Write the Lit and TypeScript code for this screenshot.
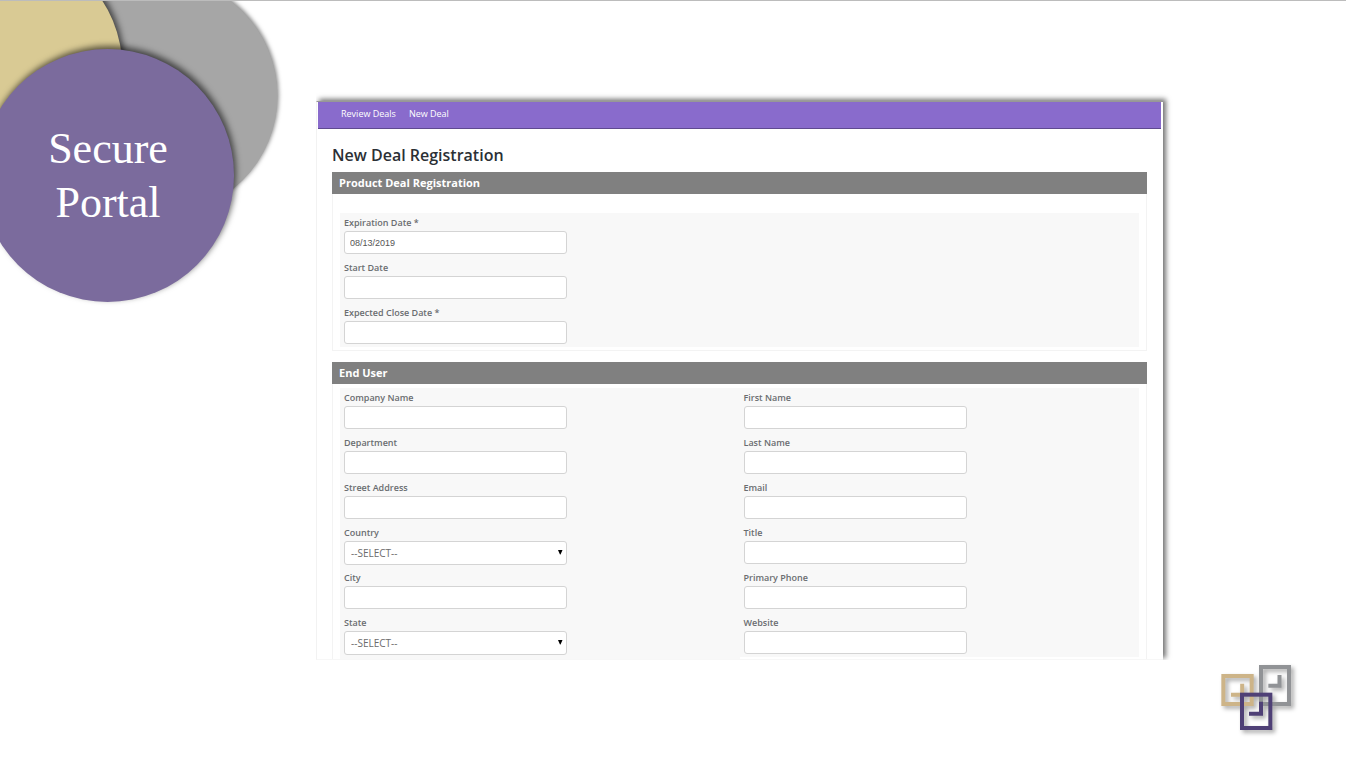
import { LitElement, html, css, svg } from "lit";
import { customElement } from "lit/decorators.js";

interface Field {
  id: string;
  label: string;
  value?: string;
  select?: boolean;
}

const DATES: Field[] = [
  { id: "expiration", label: "Expiration Date *", value: "08/13/2019" },
  { id: "start", label: "Start Date" },
  { id: "close", label: "Expected Close Date *" },
];

const COMPANY: Field[] = [
  { id: "company", label: "Company Name" },
  { id: "department", label: "Department" },
  { id: "street", label: "Street Address" },
  { id: "country", label: "Country", select: true },
  { id: "city", label: "City" },
  { id: "state", label: "State", select: true },
];

const CONTACT: Field[] = [
  { id: "first", label: "First Name" },
  { id: "last", label: "Last Name" },
  { id: "email", label: "Email" },
  { id: "title", label: "Title" },
  { id: "phone", label: "Primary Phone" },
  { id: "website", label: "Website" },
];

@customElement("deal-form")
export class DealForm extends LitElement {
  static styles = css`
    :host {
      display: block;
      color: #2b3035;
      background: #fff;
      border-top: 1px solid #979797;
      border-left: 1px solid #f2f2f2;
      border-bottom: 1px solid #f7f7f7;
      box-shadow: 3px -2px 5px rgba(0, 0, 0, 0.55);
      clip-path: inset(-12px -12px 0 0);
    }
    nav {
      display: flex;
      gap: 13px;
      margin: 0 2px 0 1px;
      padding: 0 23px;
      height: 26px;
      line-height: 24px;
      font-size: 9px;
      background: #896bcc;
      border-bottom: 1px solid #5f4a90;
    }
    nav a {
      color: #fff;
      text-decoration: none;
    }
    .content {
      padding: 14px 16px 0 15px;
    }
    h1 {
      margin: 0;
      font-size: 16px;
      line-height: 24px;
      font-weight: 600;
      padding-bottom: 5px;
    }
    section + section {
      margin-top: 11px;
    }
    h2 {
      margin: 0;
      padding: 0 7px;
      font-size: 11px;
      line-height: 22px;
      font-weight: 700;
      color: #fff;
      background: #808080;
    }
    .panel {
      border: 1px solid #f3f3f3;
      border-top: 0;
      padding: 19px 7px 3px;
    }
    .panel.open {
      border-bottom: 0;
      padding: 4px 7px 0;
      display: grid;
      grid-template-columns: 1fr 1fr;
      align-items: start;
    }
    .fields {
      display: grid;
      gap: 6px;
      padding: 2px 4px 3px;
      background: #f8f8f8;
    }
    .fields.last {
      padding-bottom: 5px;
    }
    .field {
      display: grid;
    }
    .field.pick {
      margin-bottom: -1px;
    }
    label {
      font-size: 9px;
      line-height: 16px;
      font-weight: 600;
      color: #6a6d70;
    }
    input,
    select {
      box-sizing: border-box;
      width: 223px;
      max-width: 100%;
      height: 23px;
      margin: 0;
      padding: 0 5px;
      color: #555;
      background: #fff;
      border: 1px solid #d4d4d4;
      border-radius: 3px;
      font: 9px "Liberation Sans", Arial, sans-serif;
    }
    .picker {
      position: relative;
      width: 223px;
      max-width: 100%;
    }
    select {
      display: block;
      appearance: none;
      height: 24px;
      padding: 0 6px;
      color: #6b6b6b;
      font: 10px "Open Sans", sans-serif;
    }
    .arrow {
      position: absolute;
      right: 4px;
      top: 8px;
      width: 6px;
      height: 6px;
      pointer-events: none;
    }
  `;

  private field(f: Field) {
    return f.select
      ? html`<div class="field pick">
          <label for=${f.id}>${f.label}</label>
          <div class="picker">
            <select id=${f.id}>
              <option>--SELECT--</option>
            </select>
            <svg class="arrow" viewBox="0 0 6 6"><path d="M1 1h4.500L3.500 5.500H3z" fill="#000" /></svg>
          </div>
        </div>`
      : html`<div class="field">
          <label for=${f.id}>${f.label}</label>
          <input id=${f.id} type="text" .value=${f.value ?? ""} />
        </div>`;
  }

  render() {
    return html`
      <nav><a href="#review">Review Deals</a><a href="#new">New Deal</a></nav>
      <div class="content">
        <h1>New Deal Registration</h1>
        <section>
          <h2>Product Deal Registration</h2>
          <div class="panel">
            <div class="fields">${DATES.map((f) => this.field(f))}</div>
          </div>
        </section>
        <section>
          <h2>End User</h2>
          <div class="panel open">
            <div class="fields last">${COMPANY.map((f) => this.field(f))}</div>
            <div class="fields">${CONTACT.map((f) => this.field(f))}</div>
          </div>
        </section>
      </div>
    `;
  }
}

@customElement("app-root")
export class AppRoot extends LitElement {
  static styles = css`
    :host {
      display: block;
      font-family: "Open Sans", sans-serif;
    }
    .slide {
      box-sizing: border-box;
      position: relative;
      min-height: 100vh;
      display: grid;
      grid-template-columns: 316px minmax(0, 1fr) 183px;
      grid-template-rows: auto 1fr;
      background: #fff;
      border-top: 1px solid #bcbcbc;
      overflow: hidden;
    }
    .circles {
      position: absolute;
      left: 0;
      top: -1px;
      width: 316px;
      height: 320px;
    }
    .title {
      position: relative;
      margin: 121px 100px 0 0;
      font: 44px/54px "Liberation Serif", serif;
      color: #fff;
      text-align: center;
    }
    deal-form {
      margin-top: 100px;
    }
    .logo {
      grid-column: 3;
      grid-row: 2;
      width: 110px;
      height: 95px;
      margin: -10px 31px 0 0;
      justify-self: end;
    }
    filter {
      color-interpolation-filters: sRGB;
    }
  `;

  private circles() {
    return svg`
      <defs>
        <filter id="lift" x="-20%" y="-20%" width="140%" height="140%">
          <feDropShadow dx="2" dy="-3" stdDeviation="3" flood-color="#000" flood-opacity="0.6" />
        </filter>
        <filter id="soft" x="-20%" y="-20%" width="140%" height="140%">
          <feDropShadow dx="1" dy="-1" stdDeviation="2" flood-color="#000" flood-opacity="0.5" />
        </filter>
      </defs>
      <circle cx="158" cy="96" r="119.500" fill="#a6a6a6" filter="url(#soft)" />
      <circle cx="-3.500" cy="69" r="126" fill="#d9ca94" filter="url(#lift)" />
      <circle cx="107.500" cy="175.500" r="126.500" fill="#7b6b9d" filter="url(#lift)" />
    `;
  }

  private mark() {
    return svg`
      <defs>
        <filter id="shade" x="-20%" y="-20%" width="150%" height="150%">
          <feDropShadow dx="8" dy="8" stdDeviation="6" flood-color="#000" flood-opacity="0.35" />
        </filter>
      </defs>
      <g fill="none" stroke-width="12" filter="url(#shade)">
        <g stroke="#cdb488">
          <rect x="55" y="78" width="85" height="84" />
          <path d="M111.500 101v33.500H78" />
        </g>
        <g stroke="#919396">
          <rect x="168" y="51" width="84" height="111" />
          <path d="M223.500 75v32H190" />
        </g>
        <g stroke="#4f4076">
          <rect x="111" y="134" width="85" height="100" />
          <path d="M168 155v36H132" />
        </g>
      </g>
    `;
  }

  render() {
    return html`
      <main class="slide">
        <svg class="circles" viewBox="0 0 316 320" aria-hidden="true">${this.circles()}</svg>
        <div class="title">Secure<br />Portal</div>
        <deal-form></deal-form>
        <svg class="logo" viewBox="0 0 330 285" aria-hidden="true">${this.mark()}</svg>
      </main>
    `;
  }
}
